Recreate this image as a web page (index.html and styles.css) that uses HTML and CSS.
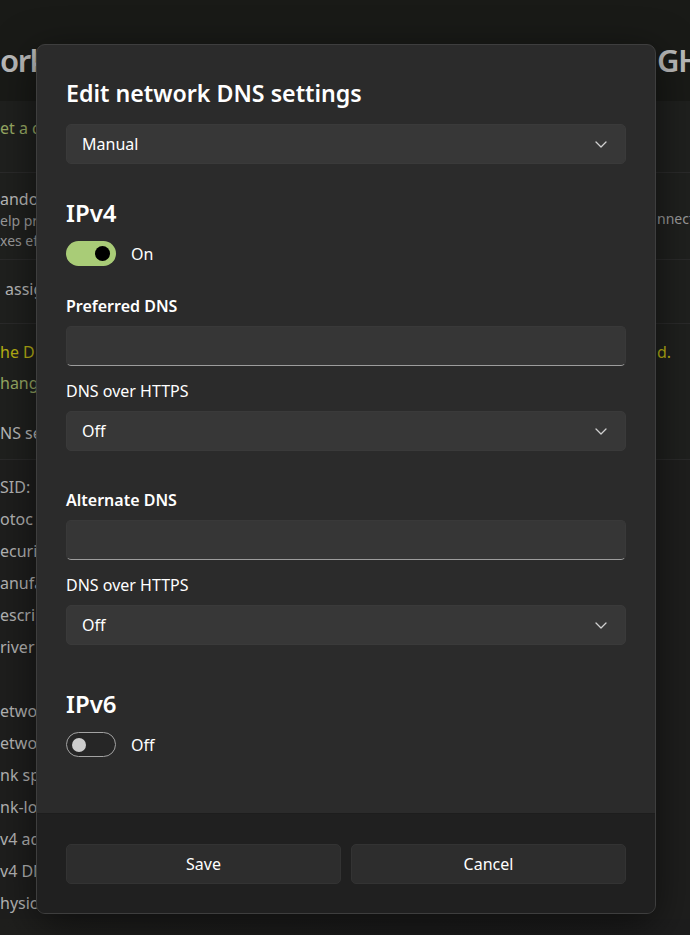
FILE: index.html
```html
<!DOCTYPE html>
<html lang="en">
<head>
<meta charset="utf-8">
<title>Edit network DNS settings</title>
<link rel="stylesheet" href="styles.css">
</head>
<body>
<div class="page">
  <header class="bg-header">
    <div class="bg-l"><span class="bg-title">ork</span></div>
    <div class="bg-r"><span class="bg-title">GH</span></div>
  </header>
  <section class="bg-rows">
    <div class="bg-row row1">
      <div class="bg-l">
        <span class="t-green">et a d</span>
      </div>
    </div>
    <div class="bg-row row2">
      <div class="bg-l">
        <span class="t-main">andor</span>
        <span class="t-sub">elp pr</span>
        <span class="t-sub">xes ef</span>
      </div>
      <div class="bg-r">
        <span class="t-sub r-connect">nnect</span>
      </div>
    </div>
    <div class="bg-row row3">
      <div class="bg-l">
        <span class="t-main r3-text">assig</span>
      </div>
    </div>
    <div class="bg-row row4">
      <div class="bg-l">
        <span class="t-yellow">he DN</span>
        <span class="t-green r4-green">hang</span>
        <span class="t-main r4-last">NS se</span>
      </div>
      <div class="bg-r">
        <span class="t-yellow">d.</span>
      </div>
    </div>
    <div class="bg-list">
      <div class="bg-l list-col">
        <span>SID:</span>
        <span>otoc</span>
        <span>ecurit</span>
        <span>anufa</span>
        <span>escrip</span>
        <span>river</span>
        <span>&nbsp;</span>
        <span>etwo</span>
        <span>etwo</span>
        <span>nk sp</span>
        <span>nk-lo</span>
        <span>v4 ad</span>
        <span>v4 DN</span>
        <span>hysica</span>
      </div>
    </div>
  </section>

  <div class="dialog" role="dialog">
    <div class="dialog-body">
      <h1 class="dialog-title">Edit network DNS settings</h1>
      <div class="select">
        <span>Manual</span>
        <svg class="chev" width="12" height="7" viewBox="0 0 12 7"><polyline points="1,1 6,6 11,1" fill="none" stroke="#d0d0d0" stroke-width="1.3" stroke-linecap="round" stroke-linejoin="round"/></svg>
      </div>

      <h2 class="section-title ipv4">IPv4</h2>
      <div class="toggle-row">
        <span class="toggle on"><span class="knob"></span></span>
        <span class="toggle-label">On</span>
      </div>

      <div class="field-label first">Preferred DNS</div>
      <div class="input"></div>
      <div class="sub-label">DNS over HTTPS</div>
      <div class="select">
        <span>Off</span>
        <svg class="chev" width="12" height="7" viewBox="0 0 12 7"><polyline points="1,1 6,6 11,1" fill="none" stroke="#d0d0d0" stroke-width="1.3" stroke-linecap="round" stroke-linejoin="round"/></svg>
      </div>

      <div class="field-label second">Alternate DNS</div>
      <div class="input"></div>
      <div class="sub-label">DNS over HTTPS</div>
      <div class="select">
        <span>Off</span>
        <svg class="chev" width="12" height="7" viewBox="0 0 12 7"><polyline points="1,1 6,6 11,1" fill="none" stroke="#d0d0d0" stroke-width="1.3" stroke-linecap="round" stroke-linejoin="round"/></svg>
      </div>

      <h2 class="section-title ipv6">IPv6</h2>
      <div class="toggle-row">
        <span class="toggle off"><span class="knob"></span></span>
        <span class="toggle-label">Off</span>
      </div>
    </div>
    <div class="dialog-footer">
      <button class="btn">Save</button>
      <button class="btn">Cancel</button>
    </div>
  </div>
</div>
</body>
</html>
```
FILE: styles.css
```css
* { box-sizing: border-box; }

html, body {
  margin: 0;
  padding: 0;
}

body {
  background: #1c1c1c;
  font-family: "Noto Sans", "Open Sans", sans-serif;
  color: #ffffff;
}

.page {
  position: relative;
  width: 690px;
  height: 935px;
  overflow: hidden;
  background: linear-gradient(90deg, #1f1f1d 0%, #1c1c1c 60%, #1d1d1d 100%);
}

/* ---------- background settings page ---------- */
.bg-l,
.bg-r {
  white-space: nowrap;
  display: flex;
  flex-direction: column;
}

.bg-l { width: 36px; }
.bg-r { width: 34px; margin-left: auto; padding-left: 1px; }

.bg-header {
  height: 101px;
  background: #191a17;
  display: flex;
  align-items: flex-start;
  padding-top: 37px;
}

.bg-title {
  font-size: 31px;
  font-weight: 600;
  line-height: 46px;
  letter-spacing: -1.5px;
  color: #b9b9b9;
}

.bg-rows {
  display: flex;
  flex-direction: column;
  font-size: 16px;
}

.bg-row {
  display: flex;
  align-items: flex-start;
  border-bottom: 1px solid #2a2a2a;
  background: #1f201e;
}

.row1 { height: 72px; padding-top: 14px; }
.row2 { height: 87px; padding-top: 14px; }
.row3 { height: 64px; padding-top: 17px; }
.row4 { height: 136px; padding-top: 15px; }

.t-main { color: #b8b8b8; line-height: 24px; }
.t-sub { color: #9a9a9a; font-size: 14px; line-height: 20px; }
.t-green { color: #97a963; line-height: 26px; }
.t-yellow { color: #b8b114; line-height: 26px; }

.r3-text { padding-left: 5px; }
.r-connect { margin-top: 22px; }
.r4-green { margin-top: 5px; }
.r4-last { margin-top: 25px; }

.bg-list {
  display: flex;
  padding-top: 11px;
  color: #b3b3b3;
  background: #1e1e1d;
  flex: 1;
}

.list-col span {
  line-height: 32px;
}

/* ---------- dialog ---------- */
.dialog {
  position: absolute;
  left: 36px;
  top: 44px;
  width: 620px;
  height: 870px;
  background: #2b2b2b;
  border: 1px solid #3e3e3e;
  border-radius: 9px;
  overflow: hidden;
  display: flex;
  flex-direction: column;
  box-shadow: 0 10px 40px rgba(0, 0, 0, 0.55);
}

.dialog-body {
  flex: 1;
  padding: 33px 29px 0;
  display: flex;
  flex-direction: column;
}

.dialog-title {
  margin: 0 0 16px;
  font-size: 23.2px;
  line-height: 30px;
  font-weight: 600;
  color: #ffffff;
}

.select {
  height: 40px;
  background: #373737;
  border: 1px solid #3a3a3a;
  border-radius: 5px;
  display: flex;
  align-items: center;
  justify-content: space-between;
  padding: 0 18px 0 15px;
  font-size: 16px;
  color: #ffffff;
}

.chev {
  display: block;
}

.section-title {
  margin: 0;
  font-size: 24px;
  line-height: 32px;
  font-weight: 600;
  color: #ffffff;
}

.ipv4 { margin-top: 33px; }
.ipv6 { margin-top: 43px; }

.toggle-row {
  margin-top: 12px;
  height: 25px;
  display: flex;
  align-items: center;
  gap: 15px;
}

.toggle {
  width: 50px;
  height: 25px;
  border-radius: 13px;
  display: flex;
  align-items: center;
}

.toggle.on {
  background: #a9cc77;
  justify-content: flex-end;
  padding-right: 6px;
}

.toggle.on .knob {
  width: 15px;
  height: 15px;
  border-radius: 50%;
  background: #000000;
}

.toggle.off {
  border: 1px solid #a3a3a3;
  background: #262626;
  padding-left: 5px;
}

.toggle.off .knob {
  width: 14px;
  height: 14px;
  border-radius: 50%;
  background: #cdcdcd;
}

.toggle-label {
  font-size: 16px;
  line-height: 22px;
  color: #ffffff;
}

.field-label {
  font-size: 16px;
  line-height: 22px;
  font-weight: 600;
  color: #ffffff;
}

.field-label.first { margin-top: 29px; }
.field-label.second { margin-top: 38px; }

.input {
  margin-top: 9px;
  height: 40px;
  background: #363636;
  border: 1px solid #393939;
  border-bottom: 1px solid #9d9d9d;
  border-radius: 5px;
}

.sub-label {
  margin-top: 14px;
  margin-bottom: 9px;
  font-size: 16px;
  line-height: 22px;
  color: #ffffff;
}

.dialog-footer {
  height: 100px;
  background: #202020;
  border-top: 1px solid #1d1d1d;
  padding: 30px 29px 0;
  display: grid;
  grid-template-columns: 1fr 1fr;
  gap: 10px;
  align-items: start;
}

.btn {
  height: 40px;
  background: #2d2d2d;
  border: 1px solid #333333;
  border-radius: 5px;
  color: #ffffff;
  font-family: "Noto Sans", "Open Sans", sans-serif;
  font-size: 16px;
}
```
